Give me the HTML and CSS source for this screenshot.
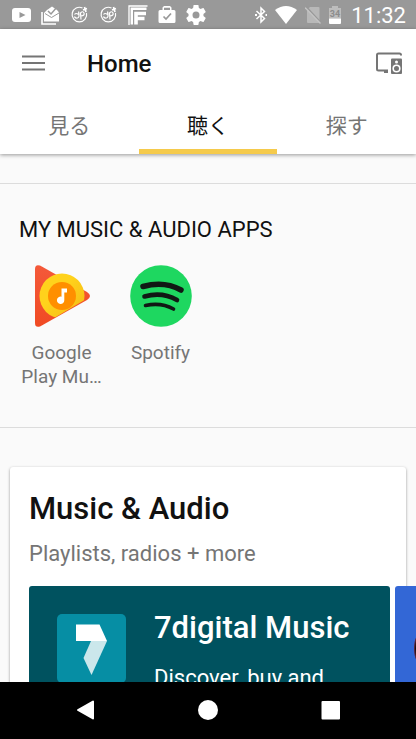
FILE: index.html
```html
<!DOCTYPE html>
<html lang="ja">
<head>
<meta charset="utf-8">
<meta name="viewport" content="width=device-width, initial-scale=1">
<title>Home</title>
<link rel="stylesheet" href="styles.css">
</head>
<body>
<div class="screen">
  <div class="status">
    <div class="status-left">
      <svg viewBox="0 0 20 20"><rect x="0" y="3" width="19" height="14" rx="3" fill="#fff"/><path d="M7.500 7l6 3-6 3z" fill="#999"/></svg>
      <svg viewBox="0 0 20 20"><path d="M1 7v12h14" fill="none" stroke="#fff" stroke-width="1.600"/><path d="M3 8L6 5l5-3.500L16 5l2 2.500V16.500H3z" fill="#fff"/><path d="M4 8.500l6.500 4L18 8" fill="none" stroke="#999" stroke-width="1"/><path d="M7 6l3 3L16.500 1.500" fill="none" stroke="#999" stroke-width="1.500"/></svg>
      <svg viewBox="0 0 20 20" fill="none" stroke="#fff" stroke-width="1.200"><path d="M12.500 3A7.300 7.300 0 1 0 16.500 8"/><path d="M8.500 6.500q1.500 6-1 6.500t-3-1.500M4.500 9.500q1.500-2 4 0M11 14.500L10.500 8q2.500-2.500 3.500 0t-3 3"/><path d="M13 5l4-1.500M14.500 2l1.500 5" stroke-width="1.700"/></svg>
      <svg viewBox="0 0 20 20" fill="none" stroke="#fff" stroke-width="1.200"><path d="M12.500 3A7.300 7.300 0 1 0 16.500 8"/><path d="M8.500 6.500q1.500 6-1 6.500t-3-1.500M4.500 9.500q1.500-2 4 0M11 14.500L10.500 8q2.500-2.500 3.500 0t-3 3"/><path d="M13 5l4-1.500M14.500 2l1.500 5" stroke-width="1.700"/></svg>
      <svg viewBox="0 0 20 20" fill="none" stroke="#fff"><path d="M1 20V1h18.500" stroke-width="1.300"/><path d="M3.800 19.500V3.800H18.500" stroke-width="2.400"/><path d="M8 19.500V8.500H18M8 13.500h8.500" stroke-width="3.600"/></svg>
      <svg viewBox="0 0 20 20"><path fill="#fff" fill-rule="evenodd" d="M7 1h6l1.500 1.500V5H17q1.500 0 1.500 1.500v10Q18.500 18 17 18H3q-1.500 0-1.500-1.500v-10Q1.500 5 3 5h2.500V2.500zm0 1.800V5h6V2.800z"/><path d="M6.500 11.500L9 14l5-5.500" fill="none" stroke="#999" stroke-width="1.700"/></svg>
      <svg viewBox="2 2 20 20"><path fill="#fff" d="M19.430 12.980c.04-.32.070-.64.070-.98s-.03-.66-.07-.98l2.110-1.650c.19-.15.240-.42.120-.64l-2-3.460c-.12-.22-.39-.3-.61-.22l-2.490 1c-.52-.4-1.080-.73-1.690-.98l-.38-2.650C14.460 2.180 14.250 2 14 2h-4c-.25 0-.46.180-.49.420l-.38 2.650c-.61.250-1.170.59-1.690.98l-2.490-1c-.23-.09-.49 0-.61.220l-2 3.460c-.13.220-.07.490.120.640l2.110 1.650c-.04.320-.07.650-.07.980s.03.660.07.980l-2.110 1.650c-.19.150-.24.420-.12.640l2 3.460c.12.220.39.300.61.220l2.490-1c.52.400 1.080.730 1.690.980l.38 2.650c.03.240.24.420.49.420h4c.25 0 .46-.18.490-.42l.38-2.650c.61-.25 1.170-.59 1.690-.98l2.490 1c.23.090.49 0 .61-.22l2-3.460c.12-.22.070-.49-.12-.64zM12 15.500a3.500 3.500 0 1 1 0-7 3.500 3.500 0 0 1 0 7z"/></svg>
    </div>
    <div class="status-right">
      <svg class="bt" viewBox="0 0 12 18" fill="none" stroke="#fff" stroke-width="1.500"><path d="M1.500 5l8 7.500L6 16V2l3.500 3.500-8 7.500"/><path d="M0 9h2M10.500 9h1.500" stroke-width="2"/></svg>
      <svg class="wifi" viewBox="0 0 22 18"><path d="M0 4Q11-4 22 4L11 18z" fill="#fff"/></svg>
      <svg class="sim" viewBox="0 0 16 18"><path d="M5 1h8.500q1 0 1 1V16q0 1-1 1H3q-1 0-1-1V4z" fill="#b8b8b8"/><path d="M1 .5l15 16" stroke="#999" stroke-width="1.500"/><path d="M0 1.500l15.500 16" stroke="#c4c4c4" stroke-width="1.300"/></svg>
      <svg class="battery" viewBox="0 0 12 18"><path d="M3 0h6v2h3v10.500H0V2h3z" fill="#bdbdbd"/><path d="M0 12.500h12V17q0 1-1 1H1q-1 0-1-1z" fill="#fff"/><text x="6" y="11" text-anchor="middle">34</text></svg>
      <time>11:32</time>
    </div>
  </div>

  <header class="header">
    <div class="appbar">
      <button class="icon-button" aria-label="Menu"><svg width="24" height="24" viewBox="0 0 24 24"><path d="M1 5.500h23M1 12h23M1 18.500h23" stroke="#757575" stroke-width="2.200"/></svg></button>
      <h1>Home</h1>
      <button class="icon-button" aria-label="Devices"><svg width="28" height="24" viewBox="0 0 28 24"><path d="M26 4.500V4q0-1.500-1.500-1.500h-21Q2 2.500 2 4v14q0 1.500 1.500 1.500H13" fill="none" stroke="#757575" stroke-width="2"/><path d="M9 19h4v3H9z" fill="#757575"/><rect x="16" y="7.500" width="11" height="15.500" rx="1" fill="#757575"/><circle cx="21.500" cy="11" r="1.500" fill="#fff"/><circle cx="21.500" cy="17.500" r="3.300" fill="none" stroke="#fff" stroke-width="1.600"/></svg></button>
    </div>
    <nav class="tabs">
      <a href="#watch">見る</a>
      <a href="#listen" class="active" aria-current="page">聴く</a>
      <a href="#find">探す</a>
    </nav>
  </header>

  <main class="content">
    <section class="apps">
      <h2>MY MUSIC &amp; AUDIO APPS</h2>
      <div class="app-list">
        <a class="app" href="#play-music">
          <svg width="62" height="62" viewBox="0 0 62 62"><defs><linearGradient id="red" x2="0" y2="1"><stop stop-color="#f4593a"/><stop offset="1" stop-color="#f04a23"/></linearGradient><linearGradient id="yellow" x2="1" y2="1"><stop offset=".4" stop-color="#ffd21c"/><stop offset="1" stop-color="#f3b914"/></linearGradient><clipPath id="tri"><path d="M-30-30H70V24L56 33.500 8 62-30 70z"/></clipPath></defs><path d="M4 4Q4-1 9 .5L56 27q6 4 0 8L9 61.500Q4 63 4 58z" fill="url(#red)"/><circle cx="31" cy="31" r="22.500" fill="url(#yellow)" clip-path="url(#tri)"/><circle cx="31" cy="31" r="14" fill="#ff8f00"/><path d="M30.500 23.500H36v4h-2.700v7.700a3.700 3.700 0 1 1-2.800-3.500z" fill="#fff"/></svg>
          <span>Google Play Mu…</span>
        </a>
        <a class="app" href="#spotify">
          <svg width="62" height="62" viewBox="0 0 62 62"><circle cx="31" cy="31" r="30.800" fill="#1ed760"/><g fill="none" stroke="#111814" stroke-linecap="round"><path d="M13 21.500Q34 15.500 51 25" stroke-width="5.500"/><path d="M14.500 31.500Q32 26.500 47 35" stroke-width="4.600"/><path d="M15.500 40.500Q31 37 43.500 44" stroke-width="3.600"/></g></svg>
          <span>Spotify</span>
        </a>
      </div>
    </section>

    <section class="card">
      <h2>Music &amp; Audio</h2>
      <p>Playlists, radios + more</p>
      <div class="carousel">
        <a class="banner" href="#7digital">
          <svg width="69" height="69" viewBox="0 0 69 69"><rect width="69" height="69" rx="5" fill="#068ea4"/><path d="M19 10.500h23.500L50 27H19z" fill="#fff"/><path d="M34 27h16L34.500 61 26.500 44z" fill="#cbe7eb"/></svg>
          <div class="banner-text">
            <h3>7digital Music</h3>
            <p>Discover, buy and</p>
          </div>
        </a>
        <a class="banner banner-next" href="#next" aria-label="Next app">
          <svg width="69" height="69" viewBox="0 0 69 69"><circle cx="34.500" cy="34.500" r="34" fill="#101014" stroke="#6b2030"/></svg>
        </a>
      </div>
    </section>
  </main>

  <div class="navbar">
    <button aria-label="Back"><svg width="20" height="20" viewBox="0 0 20 20"><path d="M3 10L18 1.500V18.500z" fill="#fff" stroke="#fff" stroke-width="2" stroke-linejoin="round"/></svg></button>
    <button aria-label="Home"><svg width="20" height="20" viewBox="0 0 20 20"><circle cx="10" cy="10" r="10" fill="#fff"/></svg></button>
    <button aria-label="Recents"><svg width="20" height="20" viewBox="0 0 20 20"><rect x="0.500" y="1" width="18.500" height="18.500" rx="1" fill="#fff"/></svg></button>
  </div>
</div>
</body>
</html>
```
FILE: styles.css
```css
* { box-sizing: border-box; }
body {
  margin: 0;
  font-family: Roboto, "Noto Sans CJK JP", sans-serif;
  background: #fafafa;
  color: #111;
}
h1, h2, h3, p { margin: 0; }
a { color: inherit; text-decoration: none; }
button { border: 0; padding: 0; background: none; }
svg { display: block; flex: none; }

.screen {
  height: 100vh;
  display: flex;
  flex-direction: column;
  overflow: hidden;
}

.status {
  flex: none;
  height: 29px;
  padding: 0 10px 0 12px;
  display: flex;
  align-items: center;
  justify-content: space-between;
  background: #999;
  color: #fff;
}
.status-left { display: flex; gap: 9px; }
.status-left svg { width: 20px; height: 20px; }
.status-right { display: flex; align-items: center; gap: 8px; }
.status-right svg { height: 18px; }
.bt { width: 12px; }
.wifi { width: 22px; }
.sim { width: 16px; }
.battery { width: 12px; }
.battery text { font-size: 9px; font-weight: 700; fill: #8c8c8c; }
.status time { margin-left: 2px; padding-top: 2px; font-size: 22px; line-height: 26px; }

.header {
  flex: none;
  position: relative;
  background: #fff;
  box-shadow: 0 1px 4px rgba(0, 0, 0, .4);
}
.appbar {
  height: 68px;
  padding: 0 13px 0 21px;
  display: flex;
  align-items: center;
}
.appbar h1 {
  flex: 1;
  margin-left: 42px;
  padding-top: 1px;
  font-size: 24px;
  font-weight: 500;
  line-height: 28px;
}
.tabs { display: flex; }
.tabs a {
  flex: 1;
  height: 57px;
  border-bottom: 5px solid transparent;
  text-align: center;
  font-size: 21px;
  line-height: 58px;
  color: #757575;
}
.tabs .active { color: #111; border-color: #f5ca4b; }

.content { flex: 1; min-height: 0; overflow: hidden; }

.apps {
  margin-top: 29px;
  padding: 33px 12px 38px;
  border: solid #dcdcdc;
  border-width: 1px 0;
}
.apps h2 {
  padding-left: 7px;
  font-size: 22px;
  font-weight: 400;
  line-height: 26px;
}
.app-list { display: flex; margin-top: 22px; }
.app {
  width: 99px;
  display: flex;
  flex-direction: column;
  align-items: center;
  gap: 14px;
  text-align: center;
  font-size: 19px;
  line-height: 24px;
  color: #757575;
}
.app span { width: 86px; }

.card {
  margin: 39px 10px 0;
  padding: 24px 0 28px 19px;
  background: #fff;
  border-radius: 3px;
  box-shadow: 0 1px 3px rgba(0, 0, 0, .4);
}
.card h2 { font-size: 31px; font-weight: 500; line-height: 36px; }
.card > p { margin-top: 13px; font-size: 22px; line-height: 28px; color: #757575; }
.carousel { display: flex; gap: 5px; margin: 18px -10px 0 0; overflow: hidden; }
.banner {
  flex: none;
  width: calc(100% - 26px);
  height: 180px;
  padding: 28px;
  display: flex;
  gap: 28px;
  background: #00525f;
  border-radius: 3px;
  color: #fff;
}
.banner-next { padding: 28px 19px; background: #3367d6; }
.banner h3 { font-size: 31px; font-weight: 500; line-height: 28px; white-space: nowrap; }
.banner p { margin-top: 22px; font-size: 22px; line-height: 28px; }

.navbar {
  flex: none;
  height: 57px;
  padding: 0 24px 2px;
  display: flex;
  background: #000;
}
.navbar button { flex: 1; display: flex; align-items: center; justify-content: center; }
```
